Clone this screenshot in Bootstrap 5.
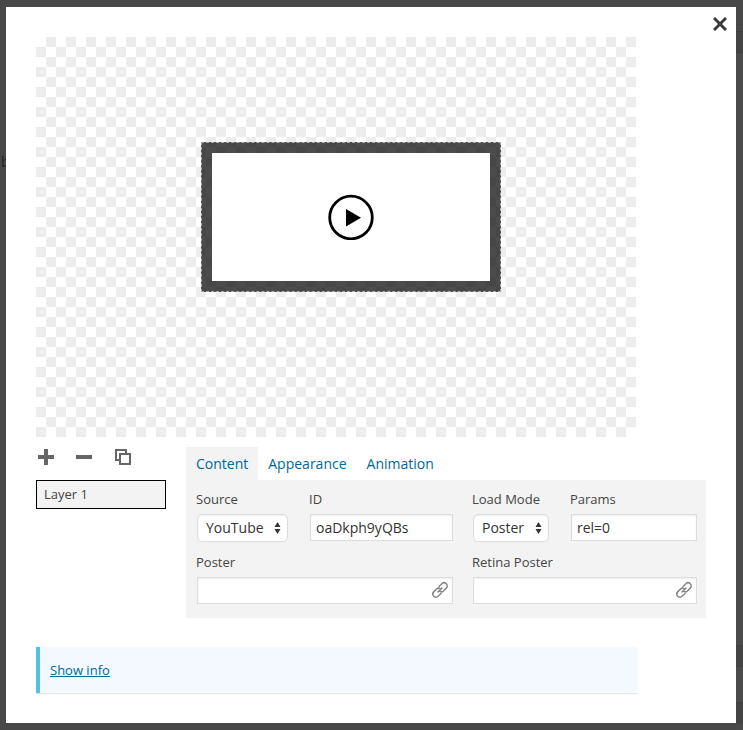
<!DOCTYPE html>
<html lang="en">
<head>
<meta charset="utf-8">
<meta name="viewport" content="width=device-width, initial-scale=1">
<title>Layer editor</title>
<link rel="stylesheet" href="https://cdn.jsdelivr.net/npm/bootstrap@5.3.0/dist/css/bootstrap.min.css">
<style>
body { background: #484848; color: #444; font-family: "Open Sans", "Noto Sans", sans-serif; font-size: 13px; line-height: 18px; }
a { color: #006799; }
.backdrop-page { position: absolute; inset: 0; overflow: hidden; z-index: -1; color: #222; font-size: 14px;
  background: linear-gradient(#484848 31px, #404040 31px 32px, #444 32px 52px, #404040 52px 53px, #4b4b4b 53px 645px, #404040 645px 646px, #444 646px 666px, #404040 666px 667px, #4b4b4b 667px 702px, #404040 702px 703px, #444 703px 724px, #4a4a4a 724px) right / 7px 100% no-repeat, #484848; }
.backdrop-page span { position: absolute; left: 1px; top: 153px; }
.editor { margin: 7px 7px 7px 6px; padding: 30px; background: #fff; }
.close-btn { position: absolute; top: 7px; right: 6px; padding: 10px; line-height: 0; }
.stage { max-width: 600px; height: 400px; background: repeating-conic-gradient(#ededed 0 25%, #fff 0 50%) 0 0 / 20px 20px; }
.video-layer { position: absolute; left: 165px; top: 105px; width: 300px; height: 150px; padding: 10px; border: 1px dashed #aaa; background: rgba(0,0,0,.7); }
.editor-body { margin-top: 10px; gap: 20px; }
.layer-list { width: 130px; }
.layer-tools { height: 33px; gap: 20px; }
.layer-tools .btn { line-height: 0; }
.layer-item { padding: 4px 7px 5px; border: 1px solid #000; background: #f3f3f3; color: #444; font-size: 13px; line-height: 18px; }
.settings-tabs { border: 0; }
.settings-tabs .nav-link { border: 0; border-radius: 0; margin: 0; padding: 8px 10px 7px; font-size: 14px; line-height: 18px; color: #006799; }
.settings-tabs .nav-link.active { background: #f3f3f3; color: #006799; }
.settings-panel { background: #f3f3f3; padding: 10px 8px 13px 10px; display: grid; grid-template-columns: 95px 145fr 80px 128fr; column-gap: 18px; row-gap: 10px; }
.wide-field { grid-column: span 2; }
.field-label { display: block; line-height: 18px; margin-bottom: 6px; }
.field-box { display: block; margin: 1px; width: calc(100% - 2px); height: 27px; padding: 0 5px; border: 1px solid #ddd; border-radius: 0; background: #fff; box-shadow: inset 0 1px 2px rgba(0,0,0,.07); color: #333; font-size: 14px; line-height: 20px; }
select.field-box { height: 28px; padding: 0 8px; border-radius: 5px; appearance: none; background: #fff url("data:image/svg+xml,%3Csvg xmlns='http://www.w3.org/2000/svg' width='7' height='12'%3E%3Cpath fill='%23333' d='M3.5 0 6.500 5h-6zM.5 7h6l-3 5z'/%3E%3C/svg%3E") right 6px center no-repeat; }
select.source-select { width: 91px; }
select.mode-select { width: 76px; }
.link-btn { position: absolute; right: 6px; top: 5px; padding: 0; line-height: 0; }
.info-note { max-width: 601px; margin-top: 29px; padding: 14px 10px; border-left: 4px solid #55c0df; background: #f4f9ff; box-shadow: 0 1px 1px rgba(0,0,0,.1); }
</style>
<script src="https://cdn.jsdelivr.net/npm/bootstrap@5.3.0/dist/js/bootstrap.bundle.min.js"></script>
</head>
<body>
<div class="backdrop-page" aria-hidden="true"><span>b</span></div>
<main class="editor">
  <button type="button" class="btn border-0 close-btn" aria-label="Close">
    <svg width="14" height="14" viewBox="0 0 14 14"><path d="M1 1l12 12M13 1L1 13" stroke="#3c3c3c" stroke-width="3" fill="none"/></svg>
  </button>

  <div class="stage position-relative">
    <div class="video-layer">
      <div class="bg-white h-100 d-flex align-items-center justify-content-center">
        <svg width="46" height="46" viewBox="0 0 46 46" role="img" aria-label="Play"><circle cx="23" cy="23.500" r="21.300" fill="#fff" stroke="#000" stroke-width="2.800"/><path d="M18 15l15 8.700L18 32.500z"/></svg>
      </div>
    </div>
  </div>

  <div class="editor-body d-flex align-items-start">
    <div class="layer-list flex-shrink-0">
      <div class="layer-tools d-flex align-items-start">
        <button type="button" class="btn border-0 p-0" aria-label="Add layer"><svg width="20" height="20" viewBox="0 0 20 20"><path d="M8 2h4v6h6v4h-6v6H8v-6H2V8h6z" fill="#666"/></svg></button>
        <button type="button" class="btn border-0 p-0" aria-label="Remove layer"><svg width="16" height="20" viewBox="0 0 16 20"><path d="M0 8h16v4H0z" fill="#666"/></svg></button>
        <button type="button" class="btn border-0 p-0" aria-label="Duplicate layer"><svg width="20" height="20" viewBox="0 0 20 20"><path d="M8 13H4V3h10v4M8 7h10v10H8z" fill="none" stroke="#666" stroke-width="2"/></svg></button>
      </div>
      <button type="button" class="layer-item d-block w-100 text-start">Layer 1</button>
    </div>

    <section class="flex-grow-1">
      <nav class="nav nav-tabs settings-tabs">
        <a class="nav-link active" href="#content" aria-current="page">Content</a>
        <a class="nav-link" href="#appearance">Appearance</a>
        <a class="nav-link" href="#animation">Animation</a>
      </nav>
      <form class="settings-panel" id="content">
        <div><label class="field-label" for="source">Source</label>
          <select class="field-box source-select" id="source"><option>YouTube</option></select></div>
        <div><label class="field-label" for="video-id">ID</label>
          <input class="field-box" id="video-id" type="text" value="oaDkph9yQBs"></div>
        <div><label class="field-label text-nowrap" for="load-mode">Load Mode</label>
          <select class="field-box mode-select" id="load-mode"><option>Poster</option></select></div>
        <div><label class="field-label" for="params">Params</label>
          <input class="field-box" id="params" type="text" value="rel=0"></div>
        <div class="wide-field"><label class="field-label" for="poster">Poster</label>
          <div class="position-relative">
            <input class="field-box" id="poster" type="text">
            <button type="button" class="btn border-0 link-btn" aria-label="Choose poster"><svg width="16" height="16" viewBox="0 0 18 18" overflow="visible"><g fill="none" stroke="#888" stroke-width="1.700" stroke-linecap="round" transform="rotate(-45 9 9)"><path d="M7 12.500H2.500a3.500 3.500 0 0 1 0-7H7a3.500 3.500 0 0 1 3.200 2.100M11 5.500h4.500a3.500 3.500 0 0 1 0 7H11a3.500 3.500 0 0 1-3.200-2.100M6 9h6"/></g></svg></button>
          </div></div>
        <div class="wide-field"><label class="field-label" for="retina">Retina Poster</label>
          <div class="position-relative">
            <input class="field-box" id="retina" type="text">
            <button type="button" class="btn border-0 link-btn" aria-label="Choose retina poster"><svg width="16" height="16" viewBox="0 0 18 18" overflow="visible"><g fill="none" stroke="#888" stroke-width="1.700" stroke-linecap="round" transform="rotate(-45 9 9)"><path d="M7 12.500H2.500a3.500 3.500 0 0 1 0-7H7a3.500 3.500 0 0 1 3.200 2.100M11 5.500h4.500a3.500 3.500 0 0 1 0 7H11a3.500 3.500 0 0 1-3.200-2.100M6 9h6"/></g></svg></button>
          </div></div>
      </form>
    </section>
  </div>

  <div class="info-note"><a href="#info">Show info</a></div>
</main>
</body>
</html>
